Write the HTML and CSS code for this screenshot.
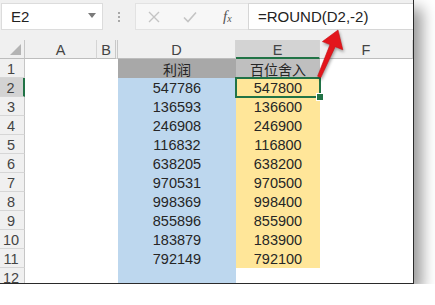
FILE: index.html
```html
<!DOCTYPE html>
<html lang="zh-CN">
<head>
  <meta charset="UTF-8">
  <meta name="viewport" content="width=device-width, initial-scale=1.0">
  <title>ROUND</title>
  <link rel="stylesheet" href="styles.css">
</head>
<body>

<div class="window">
  <div class="toolbar">
    <div class="namebox">
      <span>E2</span>
      <span class="caret"></span>
    </div>
    <div class="grip"><i></i><i></i><i></i></div>
    <div class="fbtns">
      <svg class="icon" width="12" height="12" viewBox="0 0 12 12">
        <path d="M1 1 L11 11 M11 1 L1 11" stroke="#c4c4c4" stroke-width="1.4" fill="none"/>
      </svg>
      <svg class="icon" width="14" height="12" viewBox="0 0 14 12">
        <path d="M1 6.5 L5 10.5 L13 1.5" stroke="#c4c4c4" stroke-width="1.6" fill="none"/>
      </svg>
      <span class="fx">f<sub>x</sub></span>
    </div>
    <div class="formula">=ROUND(D2,-2)</div>
  </div>

  <div class="sheet">
    <div class="hdr corner"><span class="tri"></span></div>
    <div class="hdr col">A</div>
    <div class="hdr col colb">B</div>
    <div class="hdr col">D</div>
    <div class="hdr col sel">E</div>
    <div class="hdr col">F</div>

    <div class="hdr row">1</div>
    <div class="cell"></div><div class="cell"></div>
    <div class="cell title-d">利润</div><div class="cell title-e">百位舍入</div><div class="cell"></div>

    <div class="hdr row sel">2</div>
    <div class="cell"></div><div class="cell"></div>
    <div class="cell blue">547786</div><div class="cell yellow active">547800</div><div class="cell"></div>

    <div class="hdr row">3</div>
    <div class="cell"></div><div class="cell"></div>
    <div class="cell blue">136593</div><div class="cell yellow">136600</div><div class="cell"></div>

    <div class="hdr row">4</div>
    <div class="cell"></div><div class="cell"></div>
    <div class="cell blue">246908</div><div class="cell yellow">246900</div><div class="cell"></div>

    <div class="hdr row">5</div>
    <div class="cell"></div><div class="cell"></div>
    <div class="cell blue">116832</div><div class="cell yellow">116800</div><div class="cell"></div>

    <div class="hdr row">6</div>
    <div class="cell"></div><div class="cell"></div>
    <div class="cell blue">638205</div><div class="cell yellow">638200</div><div class="cell"></div>

    <div class="hdr row">7</div>
    <div class="cell"></div><div class="cell"></div>
    <div class="cell blue">970531</div><div class="cell yellow">970500</div><div class="cell"></div>

    <div class="hdr row">8</div>
    <div class="cell"></div><div class="cell"></div>
    <div class="cell blue">998369</div><div class="cell yellow">998400</div><div class="cell"></div>

    <div class="hdr row">9</div>
    <div class="cell"></div><div class="cell"></div>
    <div class="cell blue">855896</div><div class="cell yellow">855900</div><div class="cell"></div>

    <div class="hdr row">10</div>
    <div class="cell"></div><div class="cell"></div>
    <div class="cell blue">183879</div><div class="cell yellow">183900</div><div class="cell"></div>

    <div class="hdr row">11</div>
    <div class="cell"></div><div class="cell"></div>
    <div class="cell blue">792149</div><div class="cell yellow">792100</div><div class="cell"></div>

    <div class="hdr row">12</div>
    <div class="cell"></div><div class="cell"></div>
    <div class="cell blue"></div><div class="cell"></div><div class="cell"></div>
  </div>

  <!-- red pointer to the formula -->
  <svg class="arrow" width="435" height="305" viewBox="0 0 435 305">
    <polygon points="317.6,76.2 320.8,77.6 335.2,46.7 342.8,49.8 338,30 322.4,41.6 330,44.6"
             fill="#e3161c" stroke="#c80f14" stroke-width="0.6"/>
  </svg>
</div>

</body>
</html>
```

FILE: styles.css
```css
* {
  box-sizing: border-box;
}

body {
  margin: 0;
  background-color: #fff;
  font-family: "Liberation Sans", Arial, "Noto Sans CJK SC", sans-serif;
}

.window {
  position: relative;
  width: 414px;
  height: 284px;
  background-color: #fff;
  border-right: 1px solid #2a2a2a;
  border-bottom: 1px solid #2a2a2a;
  box-shadow: 8px 8px 14px rgba(0, 0, 0, 0.4);
}

.sheet {
  height: 243px;
  overflow: hidden;
  display: grid;
  grid-template-columns: 25px 72px 21px 118px 84px 1fr;
  grid-auto-rows: 19px;
  background-color: #fff;
}

/* Formula bar */
.toolbar {
  height: 40px;
  display: flex;
  align-items: flex-start;
  padding-top: 3px;
  padding-left: 1px;
  background-color: #f0f0f0;
}

.namebox {
  width: 102px;
  height: 27px;
  display: flex;
  align-items: center;
  justify-content: space-between;
  padding: 0 6px 0 9px;
  background-color: #fff;
  border: 1px solid #dcdcdc;
  font-size: 15px;
  color: #222;
}

.caret {
  width: 0;
  height: 0;
  border-left: 4px solid transparent;
  border-right: 4px solid transparent;
  border-top: 5px solid #7a7a7a;
  margin-top: -2px;
}

.grip {
  width: 32px;
  height: 27px;
  display: flex;
  flex-direction: column;
  align-items: center;
  justify-content: center;
  gap: 2px;
}

.grip i {
  width: 2px;
  height: 2px;
  background-color: #a8a8a8;
}

.fbtns {
  width: 113px;
  height: 27px;
  display: flex;
  align-items: center;
  padding-left: 12px;
  background-color: #f7f7f7;
  border: 1px solid #e2e2e2;
  border-right: none;
}

.fbtns .icon {
  margin-right: 23px;
}

.fbtns .icon + .icon {
  margin-right: 26px;
}

.fx {
  font-family: "Liberation Serif", serif;
  font-style: italic;
  font-size: 15px;
  color: #555;
}

.fx sub {
  font-size: 10px;
  vertical-align: -1px;
}

.formula {
  flex: 1;
  height: 27px;
  display: flex;
  align-items: center;
  padding-left: 9px;
  background-color: #fff;
  border: 1px solid #d6d6d6;
  border-right: none;
  font-size: 15px;
  color: #222;
}

/* Headers */
.hdr {
  background-color: #f0f0f0;
  color: #444;
  font-size: 14.5px;
  line-height: 19px;
  text-align: center;
}

.corner {
  position: relative;
  border-right: 1px solid #c6c6c6;
  border-bottom: 1px solid #bdbdbd;
}

.tri {
  position: absolute;
  right: 3px;
  bottom: 3px;
  width: 0;
  height: 0;
  border-left: 11px solid transparent;
  border-bottom: 11px solid #b4b4b4;
}

.col {
  border-right: 1px solid #d4d4d4;
  border-bottom: 1px solid #bdbdbd;
  padding-top: 1px;
}

.colb {
  border-right: 3px double #c8c8c8;
}

.col.sel {
  background-color: #d3d3d3;
  border-bottom: 2px solid #217346;
}

.row {
  border-right: 1px solid #c6c6c6;
  border-bottom: 1px solid #d6d6d6;
  padding-top: 1px;
  padding-right: 2px;
}

.row.sel {
  background-color: #d3d3d3;
  border-right: 2px solid #217346;
}

/* Cells */
.cell {
  font-size: 14.5px;
  line-height: 19px;
  padding-top: 1px;
  text-align: center;
  color: #262626;
}

.title-d {
  background-color: #a8a8a8;
  font-family: "Noto Sans CJK SC", sans-serif;
  font-size: 14px;
  line-height: 18px;
}

.title-e {
  background-color: #bfbfbf;
  font-family: "Noto Sans CJK SC", sans-serif;
  font-size: 14px;
  line-height: 18px;
}

.blue {
  background-color: #bdd7ee;
}

.yellow {
  background-color: #ffe699;
}

.active {
  position: relative;
  outline: 2px solid #217346;
  outline-offset: -1px;
}

.active::after {
  content: "";
  position: absolute;
  right: -4px;
  bottom: -4px;
  width: 6px;
  height: 6px;
  background-color: #217346;
  border: 1px solid #fff;
}

.arrow {
  position: absolute;
  left: 0;
  top: 0;
  pointer-events: none;
  filter: drop-shadow(1px 2px 1.5px rgba(0, 0, 0, 0.35));
}
```
